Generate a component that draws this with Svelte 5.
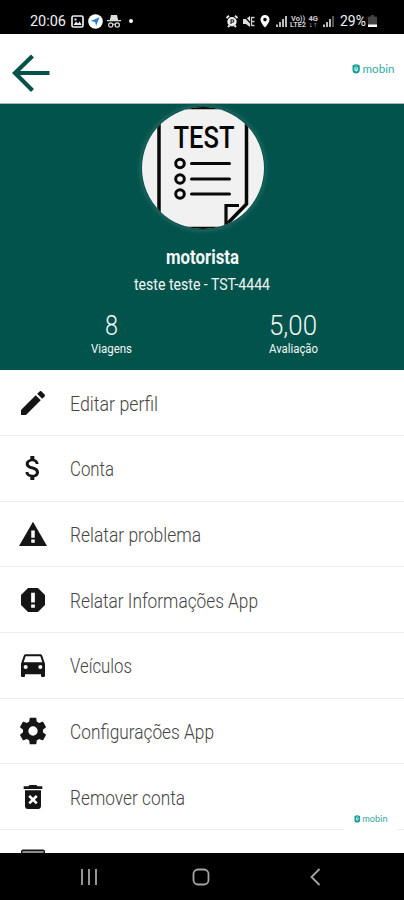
<script lang="ts">
  interface MenuItem {
    readonly label: string;
    readonly width: number;
    readonly icon: string;
  }

  const items: readonly MenuItem[] = [
    {
      label: "Editar perfil",
      width: 88,
      icon: "M20.71 7.04c.39-.39.39-1.04 0-1.41l-2.34-2.34c-.37-.39-1.02-.39-1.41 0l-1.84 1.83 3.75 3.75M3 17.25V21h3.75L17.81 9.93l-3.75-3.75L3 17.25z",
    },
    {
      label: "Conta",
      width: 44,
      icon: "M11.8 10.9c-2.27-.59-3-1.2-3-2.15 0-1.09 1.01-1.85 2.7-1.85 1.78 0 2.44.85 2.5 2.1h2.21c-.07-1.72-1.12-3.3-3.21-3.81V3h-3v2.16c-1.94.42-3.5 1.68-3.5 3.61 0 2.31 1.91 3.46 4.7 4.13 2.5.6 3 1.48 3 2.41 0 .69-.49 1.79-2.7 1.79-2.06 0-2.87-.92-2.98-2.1h-2.2c.12 2.19 1.76 3.42 3.68 3.83V21h3v-2.15c1.95-.37 3.5-1.5 3.5-3.55 0-2.84-2.43-3.81-4.7-4.4z",
    },
    {
      label: "Relatar problema",
      width: 131,
      icon: "M1.5 21h21L12 2.8 1.5 21zm11.8-2.5h-2.6v-2.3h2.6v2.3zm0-3.6h-2.6V9.3h2.6v5.6z",
    },
    {
      label: "Relatar Informações App",
      width: 188,
      icon: "M15.73 3H8.27L3 8.27v7.46L8.27 21h7.46L21 15.73V8.27L15.73 3zM13.4 17.8h-2.8v-2.5h2.8v2.5zm0-4h-2.8V6.5h2.8v7.3z",
    },
    {
      label: "Veículos",
      width: 62,
      icon: "M18.92 5.01C18.72 4.42 18.16 4 17.5 4h-11c-.66 0-1.21.42-1.42 1.01L3 11v9c0 .55.45 1 1 1h1c.55 0 1-.45 1-1v-1h12v1c0 .55.45 1 1 1h1c.55 0 1-.45 1-1v-9l-2.08-5.99zM6.5 15c-.83 0-1.5-.67-1.5-1.5S5.67 12 6.5 12s1.5.67 1.5 1.5S7.33 15 6.5 15zm11 0c-.83 0-1.5-.67-1.5-1.5s.67-1.5 1.5-1.5 1.5.67 1.5 1.5-.67 1.5-1.5 1.5zM5 10l1.5-4.5h11L19 10H5z",
    },
    {
      label: "Configurações App",
      width: 144,
      icon: "M12 15.5A3.5 3.5 0 0 1 8.5 12 3.5 3.5 0 0 1 12 8.5a3.5 3.5 0 0 1 3.5 3.5 3.5 3.5 0 0 1-3.5 3.5m7.43-2.53c.04-.32.07-.64.07-.97s-.03-.66-.07-1l2.11-1.63c.19-.15.24-.42.12-.64l-2-3.46c-.12-.22-.39-.31-.61-.22l-2.49 1c-.52-.39-1.06-.73-1.69-.98l-.37-2.65A.506.506 0 0 0 14 2h-4c-.25 0-.46.18-.5.42l-.37 2.65c-.63.25-1.17.59-1.69.98l-2.49-1c-.22-.09-.49 0-.61.22l-2 3.46c-.13.22-.07.49.12.64L4.57 11c-.04.34-.07.67-.07 1s.03.65.07.97l-2.11 1.66c-.19.15-.25.42-.12.64l2 3.46c.12.22.39.3.61.22l2.49-1.01c.52.4 1.06.74 1.69.99l.37 2.65c.04.24.25.42.5.42h4c.25 0 .46-.18.5-.42l.37-2.65c.63-.26 1.17-.59 1.69-.99l2.49 1.01c.22.08.49 0 .61-.22l2-3.46c.12-.22.07-.49-.12-.64l-2.11-1.66z",
    },
    {
      label: "Remover conta",
      width: 115,
      icon: "M6 19c0 1.1.9 2 2 2h8c1.1 0 2-.9 2-2V7H6v12zm2.46-7.12 1.41-1.41L12 12.59l2.12-2.12 1.41 1.41L13.41 14l2.12 2.12-1.41 1.41L12 15.41l-2.12 2.12-1.41-1.41L10.59 14l-2.13-2.12zM15.5 4l-1-1h-5l-1 1H5v2h14V4z",
    },
  ];
</script>

{#snippet fitted(text: string, width: number, size: number, name: string)}
  <svg class={`fitted ${name}`} width={width} height={size * 1.3} font-size={size}>
    <text x="0" y={size} textLength={width} lengthAdjust="spacingAndGlyphs">{text}</text>
  </svg>
{/snippet}

{#snippet brand(name: string)}
  <svg class={`brand ${name}`} viewBox="0 0 43 12" aria-label="mobin">
    <path class="brand-mark" d="M.5 2.5Q4 0 7.8 2.5V6.8Q7.800 10.5 4.1 10.5T.5 6.8z" />
    <path class="brand-slot" d="M3 4.2v2.2q0 1.3 1.1 1.3t1.1-1.3V4.2M4.1 2.4v1" />
    <text x="10.5" y="9.6" font-size="11" textLength="32" lengthAdjust="spacingAndGlyphs">mobin</text>
  </svg>
{/snippet}

<div class="screen">
  <div class="status">
    <div class="status-left">
      {@render fitted("20:06", 36, 15, "clock")}
      <svg width="13" height="13" viewBox="0 0 13 13">
        <rect x="1" y="1" width="11" height="11" rx="1.5" fill="none" stroke="#eee" stroke-width="1.7" />
        <path d="M2.5 10 5 6.5l2 2 1.7-2 2 3.5zM3.5 3.5h2v2h-2z" fill="#eee" />
      </svg>
      <svg width="15" height="15" viewBox="0 0 15 15">
        <circle cx="7.5" cy="7.5" r="7.3" fill="#fff" />
        <path d="M11.5 3.2 2.8 7l4.3 1 1 4z" fill="#2582d8" />
      </svg>
      <svg width="14" height="13" viewBox="0 0 14 13">
        <path d="M4 0h6l1.2 5H14v1.3H0V5h2.8z" fill="#ddd" />
        <path d="M5.8 9.5q1.2-1 2.4 0" fill="none" stroke="#ddd" />
        <circle cx="3.7" cy="10" r="2.1" fill="none" stroke="#ddd" stroke-width="1.2" />
        <circle cx="10.3" cy="10" r="2.1" fill="none" stroke="#ddd" stroke-width="1.2" />
      </svg>
      <span class="dot"></span>
    </div>
    <div class="status-right">
      <svg width="12" height="13" viewBox="0 0 12 13">
        <path d="M.5 3 3 .8M11.5 3 9 .8M2 12l1.5-1.5M10 12l-1.5-1.5" stroke="#eee" stroke-width="1.8" />
        <circle cx="6" cy="6.8" r="4.7" fill="#eee" />
        <path d="M5 9V4.8h1.5q1.3 0 1.3 1.2T6.5 7.2H5" fill="none" stroke="#222" stroke-width="1.1" />
      </svg>
      <svg class="mute" width="12" height="13" viewBox="0 0 12 13">
        <path d="M0 4h3l4-3v11L3 9H0z" fill="#ddd" />
        <path d="m1 1 10 11" stroke="#000" stroke-width="1.2" />
        <path d="M8.5 2.5h3M8.5 6.5h3M8.5 10.5h3M8.5 2v9" stroke="#ccc" stroke-width="1.3" />
      </svg>
      <svg class="pin" width="10" height="13" viewBox="0 0 10 13">
        <path fill-rule="evenodd" d="M5 0a4.5 4.5 0 0 0-4.5 4.5C.5 8 5 12.5 5 12.5S9.5 8 9.5 4.5A4.5 4.5 0 0 0 5 0zm0 2.8a1.8 1.8 0 1 1 0 3.6 1.8 1.8 0 0 1 0-3.6z" fill="#fff" />
      </svg>
      <svg class="signal" width="11" height="12" viewBox="0 0 11 12">
        <path d="M1 12V9.5M4 12V7M7 12V4M10 12V1" stroke="#bbb" stroke-width="2" />
      </svg>
      <svg width="29" height="14" viewBox="0 0 29 14" class="network">
        <text x="1" y="6.5" textLength="14" lengthAdjust="spacingAndGlyphs">Vo))</text>
        <text x="0" y="13" textLength="16" lengthAdjust="spacingAndGlyphs">LTE2</text>
        <text x="18.5" y="6.5" textLength="9.5" lengthAdjust="spacingAndGlyphs">4G</text>
        <text x="18.5" y="13" textLength="9" lengthAdjust="spacingAndGlyphs">↓↑</text>
      </svg>
      <svg class="signal second" width="11" height="12" viewBox="0 0 11 12">
        <path d="M1 12V9.5M4 12V7M7 12V4" stroke="#bbb" stroke-width="2" />
        <path d="M10 12V1" stroke="#555" stroke-width="2" />
      </svg>
      {@render fitted("29%", 26, 15, "clock")}
      <svg class="battery" width="9" height="13" viewBox="0 0 9 13">
        <path d="M3 0h3v1.5h2q1 0 1 1V12H0V2.5q0-1 1-1h2z" fill="#444" />
        <path d="M0 9.5h9V12H0z" fill="#fff" />
      </svg>
    </div>
  </div>

  <header>
    <svg class="back" width="38" height="38" viewBox="0 0 38 38" aria-label="Voltar">
      <path d="M37.5 19H2.5M20.5 2 3 19l17.5 17.5" />
    </svg>
    {@render brand("top")}
  </header>

  <section class="profile">
    <svg class="avatar" width="124" height="124" viewBox="0 0 124 124">
      <defs>
        <clipPath id="round"><circle cx="62" cy="62" r="61" /></clipPath>
      </defs>
      <g clip-path="url(#round)">
        <rect width="124" height="124" fill="#f1f1f2" />
        <path class="sheet" d="M18 0V124M105.5 0V98L85 119M18 1.5H106M18 122.5H86" />
        <path class="fold" d="M85 124V99.5H98" />
        <g class="list">
          <circle cx="39" cy="57.5" r="4.3" />
          <circle cx="39" cy="73" r="4.3" />
          <circle cx="39" cy="88" r="4.3" />
          <path d="M50.5 57.5h38M50.5 73h38M50.5 88h38" />
        </g>
        <text x="32.5" y="41.5" textLength="61" lengthAdjust="spacingAndGlyphs">TEST</text>
      </g>
    </svg>
    {@render fitted("motorista", 73, 20, "name")}
    {@render fitted("teste teste - TST-4444", 136, 16, "plate")}
    <div class="stats">
      <div class="stat">
        {@render fitted("8", 13, 28, "figure")}
        {@render fitted("Viagens", 41, 12.5, "caption")}
      </div>
      <div class="stat">
        {@render fitted("5,00", 48, 28, "figure")}
        {@render fitted("Avaliação", 49, 12.5, "caption")}
      </div>
    </div>
  </section>

  <nav class="menu">
    {#each items as item (item.label)}
      <div class="row">
        <svg class="icon" viewBox="0 0 24 24"><path fill-rule="evenodd" d={item.icon} /></svg>
        {@render fitted(item.label, item.width, 19.5, "label")}
      </div>
    {/each}
    <div class="row">
      <svg class="icon" viewBox="0 0 24 24">
        <rect x="3.5" y="3.2" width="17" height="17" rx="1" fill="#8b8b8b" stroke="#151515" />
      </svg>
    </div>
    <div class="watermark">{@render brand("small")}</div>
  </nav>

  <footer>
    <svg width="16" height="16" viewBox="0 0 16 16"><path d="M1 0v16M8 0v16M15 0v16" /></svg>
    <svg width="18" height="18" viewBox="0 0 18 18"><rect x="1.5" y="1.5" width="15" height="15" rx="4.5" /></svg>
    <svg width="16" height="18" viewBox="0 0 16 18"><path d="m14.5 1-8 8 8 8" /></svg>
  </footer>
</div>

<style>
  :global(body) {
    margin: 0;
    background: #000;
  }

  .screen {
    width: 404px;
    height: 900px;
    display: flex;
    flex-direction: column;
    overflow: hidden;
    background: #fff;
    font-family: Roboto, "Open Sans", sans-serif;
  }

  svg {
    display: block;
    flex: none;
  }

  .fitted {
    overflow: visible;
    fill: currentColor;
  }

  .status {
    height: 34px;
    box-sizing: border-box;
    padding: 8px 27px 0 30px;
    display: flex;
    justify-content: space-between;
    background: #000;
    color: #f2f2f2;
  }

  .status-left,
  .status-right {
    height: 26px;
    display: flex;
    align-items: center;
  }

  .status-left {
    gap: 5px;
  }

  .status-left svg + svg + svg {
    margin-left: -1px;
  }

  .clock {
    height: 20px;
  }

  .dot {
    width: 4px;
    height: 4px;
    margin-left: 3px;
    border-radius: 50%;
    background: #fff;
  }

  .mute {
    margin-left: 5px;
  }

  .pin {
    margin-left: 5px;
  }

  .signal {
    margin: 0 3px 0 6px;
  }

  .second {
    margin: 0 6px 0 4px;
  }

  .network {
    fill: #ccc;
    font-size: 7px;
    font-weight: 700;
  }

  .battery {
    margin-left: 2px;
  }

  header {
    height: 70px;
    box-sizing: border-box;
    padding: 0 9px 0 12px;
    display: flex;
    align-items: center;
    justify-content: space-between;
    border-bottom: 1px solid #a9b5b4;
  }

  .back {
    margin-top: 9px;
    fill: none;
    stroke: #07514a;
    stroke-width: 4.2;
  }

  .brand text {
    fill: #35aaa1;
    font-family: Lato, sans-serif;
  }

  .brand-mark {
    fill: #14a096;
  }

  .brand-slot {
    fill: none;
    stroke: #e8f6f5;
    stroke-width: 1.2;
  }

  .top {
    width: 43px;
    height: 12px;
  }

  .profile {
    height: 266px;
    display: flex;
    flex-direction: column;
    align-items: center;
    background: #03534d;
    color: #f3f7f6;
  }

  .avatar {
    margin: 2px 0 0 2px;
    border-radius: 50%;
    box-shadow: 0 0 5px #3c7771;
  }

  .avatar text {
    fill: #080808;
    font-size: 31px;
    font-weight: 500;
  }

  .sheet {
    fill: none;
    stroke: #080808;
    stroke-width: 3.5;
  }

  .fold {
    fill: none;
    stroke: #080808;
    stroke-width: 3.2;
  }

  .list {
    fill: none;
    stroke: #080808;
    stroke-width: 3;
    stroke-linecap: round;
  }

  .name {
    height: 24px;
    margin-top: 14px;
    font-weight: 700;
  }

  .plate {
    height: 20px;
    margin-top: 6px;
    font-weight: 400;
  }

  .stats {
    width: 364px;
    margin-top: 13px;
    display: grid;
    grid-template-columns: 1fr 1fr;
  }

  .stat {
    display: flex;
    flex-direction: column;
    align-items: center;
  }

  .figure {
    height: 32.5px;
    font-weight: 300;
  }

  .caption {
    height: 18px;
  }

  .menu {
    position: relative;
    height: 483px;
    box-sizing: border-box;
    padding-top: 0.3px;
    overflow: hidden;
  }

  .row {
    height: 65.7px;
    box-sizing: border-box;
    padding-left: 17px;
    display: flex;
    align-items: center;
    gap: 21px;
    border-bottom: 1px solid #ededed;
  }

  .icon {
    width: 32px;
    height: 32px;
    fill: #151515;
  }

  .label {
    height: 24px;
    color: #444;
    font-weight: 300;
  }

  .watermark {
    position: absolute;
    right: 6px;
    bottom: 10px;
    width: 54px;
    height: 48px;
    display: grid;
    place-items: center;
    background: #fff;
  }

  .small {
    width: 34px;
    height: 10px;
  }

  footer {
    height: 47px;
    padding: 0 83px 0 81px;
    display: flex;
    align-items: center;
    justify-content: space-between;
    background: #000;
  }

  footer svg {
    fill: none;
    stroke: #a5a5a5;
    stroke-width: 1.8;
  }
</style>
